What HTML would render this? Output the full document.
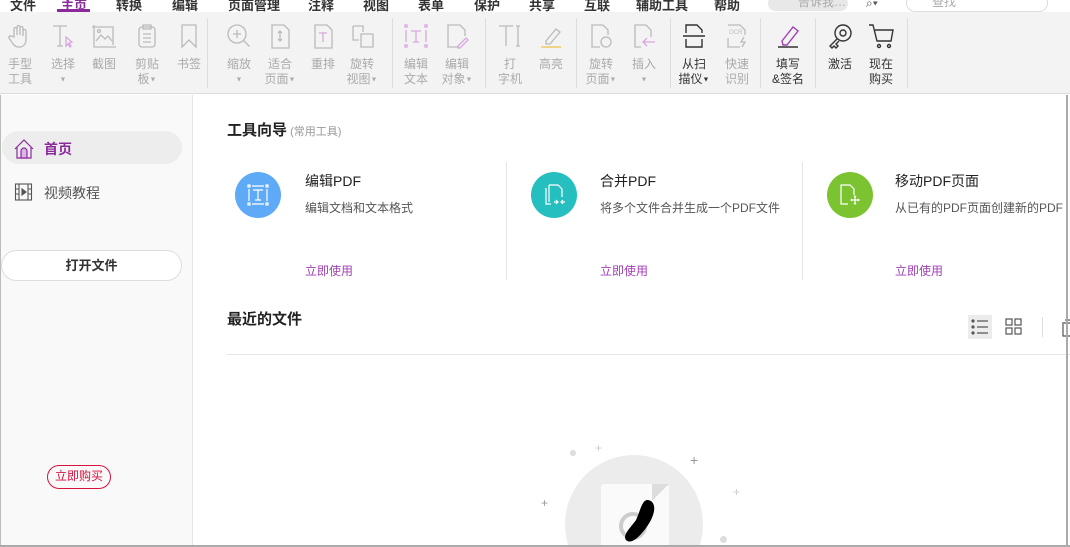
<!DOCTYPE html>
<html><head><meta charset="utf-8"><style>
*{margin:0;padding:0;box-sizing:border-box}
html{width:1070px;height:547px;overflow:hidden}
body{width:1070px;height:547px;overflow:hidden;position:relative;background:#fff;font-family:"Liberation Sans","Noto Sans CJK SC",sans-serif;font-size:12px;color:#333}
.a{position:absolute}
.menu span{position:absolute;top:-5px;font-size:13px;font-weight:bold;color:#333}
.tb{position:absolute;left:0;top:12px;width:1070px;height:82px;background:#f3f3f3;border-bottom:1px solid #ddd}
.it{position:absolute;top:10px;width:40px;text-align:center;line-height:15px;color:#aaa;font-size:12px}
.it svg{display:block;margin:0 auto 7px;width:28px;height:28px}
.it.on{color:#333}
.sep{position:absolute;top:6px;width:1px;height:70px;background:#ddd}
.dd{font-size:7px;vertical-align:middle}
.card .t{position:absolute;font-size:14px;color:#222}
.card .d{position:absolute;font-size:12px;color:#555}
.card .u{position:absolute;font-size:12px;color:#a33fb7}
</style></head><body>
<div class="a" style="left:0;top:0;width:1070px;height:547px;overflow:hidden">
<div class="menu">
<span style="left:10px">文件</span>
<span style="left:61px;color:#8a2a9b">主页</span>
<div class="a" style="left:57px;top:9px;width:33px;height:3px;background:#8a2a9b"></div>
<span style="left:116px">转换</span>
<span style="left:172px">编辑</span>
<span style="left:228px">页面管理</span>
<span style="left:308px">注释</span>
<span style="left:363px">视图</span>
<span style="left:418px">表单</span>
<span style="left:474px">保护</span>
<span style="left:529px">共享</span>
<span style="left:584px">互联</span>
<span style="left:636px">辅助工具</span>
<span style="left:714px">帮助</span>
</div>
<div class="a" style="left:768px;top:-4px;width:80px;height:15px;border-radius:8px;background:#e8e8e8;color:#aaa;font-size:12px;padding-left:30px;line-height:13px">告诉我…</div>
<div class="a" style="left:866px;top:-4px;color:#555">⌕▾</div>
<div class="a" style="left:906px;top:-6px;width:142px;height:18px;border:1px solid #ddd;border-radius:9px;background:#fff;color:#aaa;padding-left:25px;line-height:14px">查找</div>

<div class="tb">
<div class="it" style="left:0"><svg viewBox="0 0 28 28" fill="none" stroke="#bbb" stroke-width="1.3"><path d="M8 15V7a1.5 1.5 0 013 0v6V5a1.5 1.5 0 013 0v8V6a1.5 1.5 0 013 0v8V9a1.5 1.5 0 013 0v9c0 4-3 7-6 7h-2c-3 0-5-3-7-6l-2-3a1.5 1.5 0 012-2z"/></svg>手型<br>工具</div>
<div class="it" style="left:43px"><svg viewBox="0 0 28 28" fill="none" stroke="#bbb" stroke-width="1.3"><path d="M4 4h14M11 4v20M8 24h6"/><path d="M17 15l6 5-3 1 2 3-1 1-2-3-2 2z" stroke="#d9a7e0"/></svg>选择<br><span class="dd">▼</span></div>
<div class="it" style="left:84px"><svg viewBox="0 0 28 28" fill="none" stroke="#bbb" stroke-width="1.3"><path d="M4 3v22h22M2 5h21v18"/><path d="M6 19l5-6 4 4 3-3 4 5"/><circle cx="9" cy="9" r="1.5"/></svg>截图</div>
<div class="it" style="left:127px"><svg viewBox="0 0 28 28" fill="none" stroke="#bbb" stroke-width="1.3"><rect x="6" y="5" width="16" height="20" rx="3"/><path d="M10 3h8v4h-8zM10 12h8M10 16h8M10 20h8"/></svg>剪贴<br>板<span class="dd">▼</span></div>
<div class="it" style="left:169px"><svg viewBox="0 0 28 28" fill="none" stroke="#bbb" stroke-width="1.3"><path d="M7 3h14v22l-7-7-7 7z"/></svg>书签</div>
<div class="sep" style="left:207px"></div>
<div class="it" style="left:219px"><svg viewBox="0 0 28 28" fill="none" stroke="#bbb" stroke-width="1.3"><circle cx="12" cy="12" r="9"/><path d="M18.5 18.5l6 6M12 8v8M8 12h8"/></svg>缩放<br><span class="dd">▼</span></div>
<div class="it" style="left:260px"><svg viewBox="0 0 28 28" fill="none" stroke="#bbb" stroke-width="1.3"><path d="M6 3h12l5 5v18H6z"/><path d="M14 9v10M12 11l2-2 2 2M12 17l2 2 2-2"/></svg>适合<br>页面<span class="dd">▼</span></div>
<div class="it" style="left:303px"><svg viewBox="0 0 28 28" fill="none" stroke="#bbb" stroke-width="1.3"><path d="M6 3h12l5 5v18H6z"/><path d="M10 11h8M14 11v9" stroke="#d9a7e0"/></svg>重排</div>
<div class="it" style="left:342px"><svg viewBox="0 0 28 28" fill="none" stroke="#bbb" stroke-width="1.3"><path d="M5 4h10v6M5 4v14h6M13 12h12v13H13z"/></svg>旋转<br>视图<span class="dd">▼</span></div>
<div class="sep" style="left:392px"></div>
<div class="it" style="left:396px"><svg viewBox="0 0 28 28" fill="none" stroke="#d9a7e0" stroke-width="1.3"><rect x="3" y="3" width="2" height="2"/><rect x="23" y="3" width="2" height="2"/><rect x="3" y="23" width="2" height="2"/><rect x="23" y="23" width="2" height="2"/><path d="M9 9h10M14 9v11M11 20h6M4 8v12M24 8v12"/></svg>编辑<br>文本</div>
<div class="it" style="left:437px"><svg viewBox="0 0 28 28" fill="none" stroke="#bbb" stroke-width="1.3"><path d="M16 25H5V3h12l5 5v6"/><path d="M15 24l8-8 2 2-8 8h-2z" stroke="#d9a7e0"/></svg>编辑<br>对象<span class="dd">▼</span></div>
<div class="sep" style="left:485px"></div>
<div class="it" style="left:490px"><svg viewBox="0 0 28 28" fill="none" stroke="#bbb" stroke-width="1.3"><path d="M3 4h14M10 4v20M20 4h4M22 4v20M20 24h4"/></svg>打<br>字机</div>
<div class="it" style="left:531px"><svg viewBox="0 0 28 28" fill="none" stroke="#bbb" stroke-width="1.3"><path d="M9 19l10-12 4 3-10 12H9z"/><path d="M4 25h20" stroke="#f0d48a" stroke-width="2"/></svg>高亮</div>
<div class="sep" style="left:576px"></div>
<div class="it" style="left:581px"><svg viewBox="0 0 28 28" fill="none" stroke="#bbb" stroke-width="1.3"><path d="M13 25H5V3h11l5 5v5"/><circle cx="19" cy="20" r="5"/></svg>旋转<br>页面<span class="dd">▼</span></div>
<div class="it" style="left:624px"><svg viewBox="0 0 28 28" fill="none" stroke="#bbb" stroke-width="1.3"><path d="M11 25H5V3h11l5 5v7"/><path d="M13 20h12M17 16l-4 4 4 4" stroke="#d9a7e0"/></svg>插入<br><span class="dd">▼</span></div>
<div class="sep" style="left:670px"></div>
<div class="it on" style="left:674px"><svg viewBox="0 0 28 28" fill="none" stroke="#333" stroke-width="1.4"><path d="M6 11V3h11l5 5v3M6 17v8h16v-8M3 14h22"/></svg>从扫<br>描仪<span class="dd">▼</span></div>
<div class="it" style="left:717px"><svg viewBox="0 0 28 28" fill="none" stroke="#bbb" stroke-width="1.3"><path d="M5 16v9h12M5 3h12l5 5v5"/><path d="M21 15l-3 5h4l-3 5"/><text x="6" y="12" font-size="6" fill="#bbb" stroke="none">OCR</text></svg>快速<br>识别</div>
<div class="sep" style="left:760px"></div>
<div class="it on" style="left:768px"><svg viewBox="0 0 28 28" fill="none" stroke="#a33fb7" stroke-width="1.4"><path d="M8 19l11-14 5 4-11 14H9z"/><path d="M4 25h20" stroke="#333"/></svg>填写<br>&amp;签名</div>
<div class="sep" style="left:815px"></div>
<div class="it on" style="left:820px"><svg viewBox="0 0 28 28" fill="none" stroke="#333" stroke-width="1.4"><circle cx="17" cy="11" r="8"/><circle cx="17" cy="11" r="3"/><path d="M11 17l-7 7 2 2 2-2 2 2 2-2-2-2 3-3"/></svg>激活</div>
<div class="it on" style="left:861px"><svg viewBox="0 0 28 28" fill="none" stroke="#333" stroke-width="1.4"><path d="M2 3h4l4 16h14l2-11H8"/><circle cx="12" cy="24" r="1.5"/><circle cx="22" cy="24" r="1.5"/></svg>现在<br>购买</div>
<div class="sep" style="left:907px"></div>
</div>

<div class="a" style="left:0;top:95px;width:193px;height:452px;background:#f9f9f9;border-right:1px solid #e3e3e3;border-left:1px solid #bbb"></div>
<div class="a" style="left:2px;top:131px;width:180px;height:33px;border-radius:17px;background:#ededed"></div>
<svg class="a" style="left:13px;top:138px" width="22" height="22" viewBox="0 0 22 22" fill="none" stroke="#8a2a9b" stroke-width="1.2"><path d="M2 11L11 2l9 9M4 9v11h14V9"/><path d="M8 20v-7a3 3 0 016 0v7z" fill="#e0b3e8"/></svg>
<div class="a" style="left:44px;top:139px;font-size:14px;font-weight:bold;color:#8a2a9b">首页</div>
<svg class="a" style="left:14px;top:182px" width="20" height="20" viewBox="0 0 20 20" fill="none" stroke="#555" stroke-width="1.1"><rect x="1.5" y="2" width="16" height="16"/><path d="M5 2v16M14 2v16M1.5 7h3.5M1.5 12h3.5M14 7h3.5M14 12h3.5"/><path d="M8 7l4 3-4 3z" fill="#555"/></svg>
<div class="a" style="left:44px;top:183px;font-size:14px;color:#555">视频教程</div>
<div class="a" style="left:1px;top:250px;width:181px;height:31px;border:1px solid #ddd;border-radius:16px;background:#fff;text-align:center;line-height:29px;font-size:13px;font-weight:bold;color:#333">打开文件</div>
<div class="a" style="left:47px;top:465px;width:64px;height:24px;border:1.5px solid #d7123f;border-radius:12px;text-align:center;line-height:21px;color:#d7123f;font-size:12px">立即购买</div>

<div class="a" style="left:227px;top:119px;font-size:15px;font-weight:bold;color:#222">工具向导<span style="font-size:11px;font-weight:normal;color:#999"> (常用工具)</span></div>
<div class="card">
<div class="a" style="left:235px;top:172px;width:46px;height:46px;border-radius:50%;background:#5eaaf7"></div>
<svg class="a" style="left:245px;top:182px" width="26" height="26" viewBox="0 0 26 26" fill="none" stroke="#fff" stroke-width="1.2"><rect x="3" y="3" width="2" height="2"/><rect x="21" y="3" width="2" height="2"/><rect x="3" y="21" width="2" height="2"/><rect x="21" y="21" width="2" height="2"/><path d="M8 8h10M13 8v10M10 18h6M4 7v12M22 7v12M7 4h12M7 22h12"/></svg>
<div class="t" style="left:305px;top:171px">编辑PDF</div>
<div class="d" style="left:305px;top:199px">编辑文档和文本格式</div>
<div class="u" style="left:305px;top:262px">立即使用</div>
<div class="a" style="left:506px;top:162px;width:1px;height:118px;background:#e5e5e5"></div>
<div class="a" style="left:531px;top:172px;width:46px;height:46px;border-radius:50%;background:#26bfbf"></div>
<svg class="a" style="left:541px;top:182px" width="26" height="26" viewBox="0 0 26 26" fill="none" stroke="#fff" stroke-width="1.2"><path d="M5 6V22h5M8 3h9l4 4v8M8 3v17"/><path d="M13 20h4M15 18l2 2-2 2M24 20h-4M22 18l-2 2 2 2"/></svg>
<div class="t" style="left:600px;top:171px">合并PDF</div>
<div class="d" style="left:600px;top:199px">将多个文件合并生成一个PDF文件</div>
<div class="u" style="left:600px;top:262px">立即使用</div>
<div class="a" style="left:802px;top:162px;width:1px;height:118px;background:#e5e5e5"></div>
<div class="a" style="left:827px;top:172px;width:46px;height:46px;border-radius:50%;background:#7cc332"></div>
<svg class="a" style="left:837px;top:182px" width="26" height="26" viewBox="0 0 26 26" fill="none" stroke="#fff" stroke-width="1.2"><path d="M11 22H4V3h9l4 4v6"/><path d="M18 14v8M14 18h8M17 15l1-1 1 1M17 21l1 1 1-1M15 17l-1 1 1 1M21 17l1 1-1 1"/></svg>
<div class="t" style="left:895px;top:171px">移动PDF页面</div>
<div class="d" style="left:895px;top:199px">从已有的PDF页面创建新的PDF</div>
<div class="u" style="left:895px;top:262px">立即使用</div>
</div>

<div class="a" style="left:227px;top:308px;font-size:15px;font-weight:bold;color:#222">最近的文件</div>
<div class="a" style="left:968px;top:315px;width:24px;height:24px;background:#ececec"></div>
<svg class="a" style="left:970px;top:317px" width="20" height="20" viewBox="0 0 20 20" fill="none" stroke="#555" stroke-width="1.2"><circle cx="3" cy="4" r="1" fill="#555"/><circle cx="3" cy="10" r="1" fill="#555"/><circle cx="3" cy="16" r="1" fill="#555"/><path d="M7 4h11M7 10h11M7 16h11"/></svg>
<svg class="a" style="left:1005px;top:318px" width="17" height="17" viewBox="0 0 17 17" fill="none" stroke="#555" stroke-width="1.2"><rect x="1" y="1" width="6" height="6"/><rect x="10" y="1" width="6" height="6"/><rect x="1" y="10" width="6" height="6"/><rect x="10" y="10" width="6" height="6"/></svg>
<div class="a" style="left:1042px;top:317px;width:1px;height:20px;background:#ddd"></div>
<svg class="a" style="left:1062px;top:319px" width="8" height="18" viewBox="0 0 8 18" fill="none" stroke="#555" stroke-width="1.2"><path d="M1 5v12h7M0 4h8M3 1h5"/></svg>
<div class="a" style="left:227px;top:354px;width:843px;height:1px;background:#e5e5e5"></div>
<div class="a" style="left:1066px;top:95px;width:2px;height:452px;background:#aaa"></div>

<div class="a" style="left:540px;top:440px;width:220px;height:107px;overflow:hidden">
<div class="a" style="left:25px;top:15px;width:138px;height:138px;border-radius:50%;background:#ececec"></div>
<div class="a" style="left:61px;top:44px;width:68px;height:80px;background:#fafafa;border-radius:3px"></div>
<div class="a" style="left:112px;top:44px;width:0;height:0;border-left:17px solid #ddd;border-bottom:17px solid transparent"></div>
<div class="a" style="left:30px;top:10px;width:6px;height:6px;border-radius:50%;background:#ddd"></div>
<div class="a" style="left:180px;top:96px;width:7px;height:7px;border-radius:50%;background:#ddd"></div>
<div class="a" style="left:55px;top:1px;color:#ccc;font-size:12px">+</div>
<div class="a" style="left:150px;top:12px;color:#999;font-size:14px">+</div>
<div class="a" style="left:1px;top:56px;color:#999;font-size:12px">+</div>
<div class="a" style="left:193px;top:45px;color:#ccc;font-size:12px">+</div>
<svg class="a" style="left:78px;top:58px" width="45" height="49" viewBox="0 0 45 49"><circle cx="15" cy="28" r="12" fill="none" stroke="#ccc" stroke-width="4"/><path d="M30 2c10 2 7 16 -2 28s-16 16-20 12c-4-5 6-14 10-20 4-8 6-21 12-20z" fill="#000"/></svg>
</div>
<div class="a" style="left:0;top:545px;width:1070px;height:2px;background:#aaa"></div>
</div>
</body></html>
